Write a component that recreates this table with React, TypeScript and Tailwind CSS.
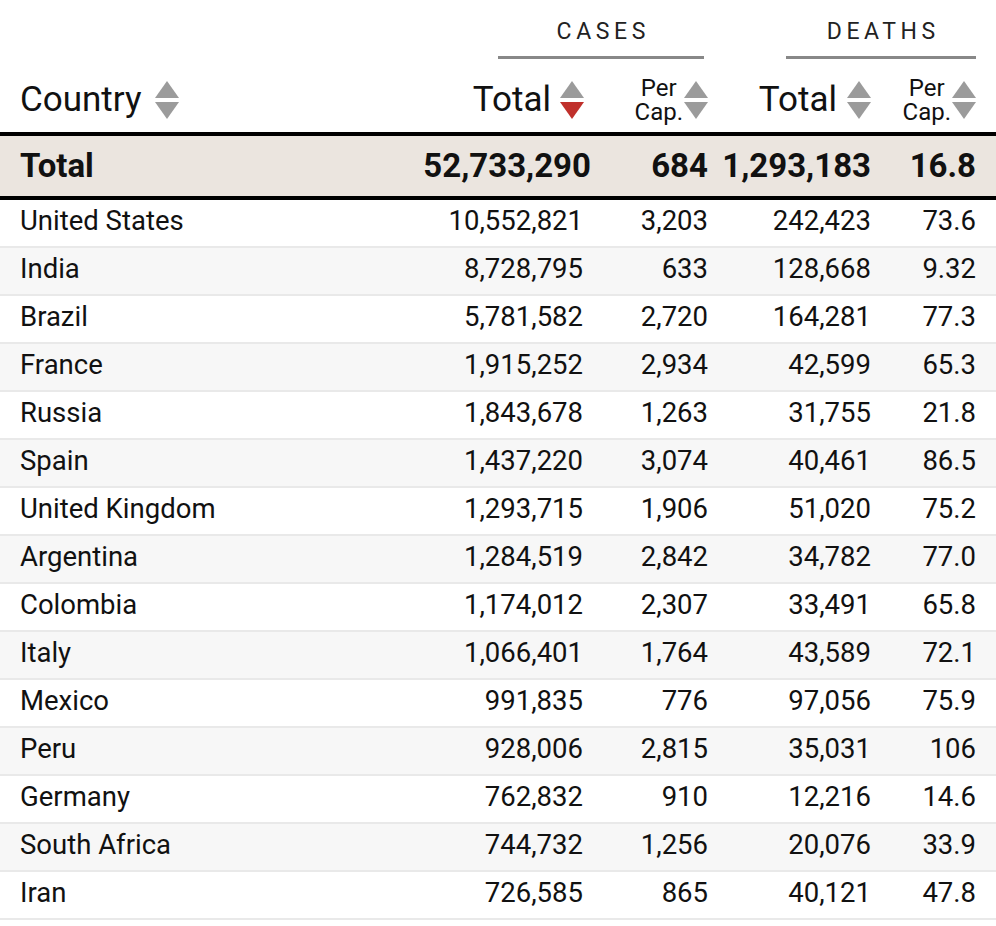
import React from "react";

type Row = [string, string, string, string, string];

const rows: Row[] = [
  ["United States", "10,552,821", "3,203", "242,423", "73.6"],
  ["India", "8,728,795", "633", "128,668", "9.32"],
  ["Brazil", "5,781,582", "2,720", "164,281", "77.3"],
  ["France", "1,915,252", "2,934", "42,599", "65.3"],
  ["Russia", "1,843,678", "1,263", "31,755", "21.8"],
  ["Spain", "1,437,220", "3,074", "40,461", "86.5"],
  ["United Kingdom", "1,293,715", "1,906", "51,020", "75.2"],
  ["Argentina", "1,284,519", "2,842", "34,782", "77.0"],
  ["Colombia", "1,174,012", "2,307", "33,491", "65.8"],
  ["Italy", "1,066,401", "1,764", "43,589", "72.1"],
  ["Mexico", "991,835", "776", "97,056", "75.9"],
  ["Peru", "928,006", "2,815", "35,031", "106"],
  ["Germany", "762,832", "910", "12,216", "14.6"],
  ["South Africa", "744,732", "1,256", "20,076", "33.9"],
  ["Iran", "726,585", "865", "40,121", "47.8"],
];

function SortArrows({ active }: { active?: boolean }) {
  return (
    <svg width="24" height="38" viewBox="0 0 24 38" className="shrink-0">
      <polygon points="12,0 24,17 0,17" fill="#9b9b9b" />
      <polygon points="0,21 24,21 12,38" fill={active ? "#c0302b" : "#9b9b9b"} />
    </svg>
  );
}

function PerCap() {
  return (
    <span className="flex flex-col items-center text-[24px]">
      <span className="block h-[24px] leading-[24px]">Per</span>
      <span className="block h-[24px] leading-[24px]">Cap.</span>
    </span>
  );
}

const cols = "grid grid-cols-[400px_171px_117px_163px_105px]";

export default function App() {
  return (
    <div
      className="w-[996px] bg-white text-[#111]"
      style={{ fontFamily: "Roboto, 'Noto Sans', sans-serif" }}
    >
      {/* group headers */}
      <div className={`${cols} px-[20px] pt-[17px]`}>
        <div />
        <div className="col-span-2 ml-[78px] mr-[4px] flex flex-col items-center">
          <div className="text-[23px] leading-[30px] tracking-[0.2em] pl-[0.2em] text-[#222]">CASES</div>
          <div className="mt-[9px] h-[3px] w-full bg-[#888]" />
        </div>
        <div className="col-span-2 ml-[78px] flex flex-col items-center">
          <div className="text-[23px] leading-[30px] tracking-[0.2em] pl-[0.2em] text-[#222]">DEATHS</div>
          <div className="mt-[9px] h-[3px] w-full bg-[#888]" />
        </div>
      </div>

      {/* column headers */}
      <div className={`${cols} px-[20px] h-[73px] pt-[8px] items-center`}>
        <div className="flex items-center gap-[13px]">
          <span className="text-[35px] leading-none">Country</span>
          <SortArrows />
        </div>
        <div className="flex items-center justify-end gap-[9px] pr-[7px]">
          <span className="text-[35px] leading-none">Total</span>
          <SortArrows active />
        </div>
        <div className="flex items-center justify-end gap-[1px]">
          <PerCap />
          <SortArrows />
        </div>
        <div className="flex items-center justify-end gap-[10px]">
          <span className="text-[35px] leading-none">Total</span>
          <SortArrows />
        </div>
        <div className="flex items-center justify-end gap-[1px]">
          <PerCap />
          <SortArrows />
        </div>
      </div>

      {/* total row */}
      <div
        className={`${cols} px-[20px] h-[68px] items-center bg-[#ebe5df] border-y-[4px] border-black font-bold text-[33px]`}
      >
        <div>Total</div>
        <div className="text-right">52,733,290</div>
        <div className="text-right">684</div>
        <div className="text-right">1,293,183</div>
        <div className="text-right">16.8</div>
      </div>

      {/* data rows */}
      {rows.map((r, i) => (
        <div
          key={r[0]}
          className={`${cols} px-[20px] h-[48px] pb-[5px] items-center border-b-[2px] border-[#e9e9e9] text-[27.5px] ${
            i % 2 === 1 ? "bg-[#f7f7f7]" : "bg-white"
          }`}
        >
          <div>{r[0]}</div>
          <div className="text-right pr-[8px]">{r[1]}</div>
          <div className="text-right">{r[2]}</div>
          <div className="text-right">{r[3]}</div>
          <div className="text-right">{r[4]}</div>
        </div>
      ))}
    </div>
  );
}
